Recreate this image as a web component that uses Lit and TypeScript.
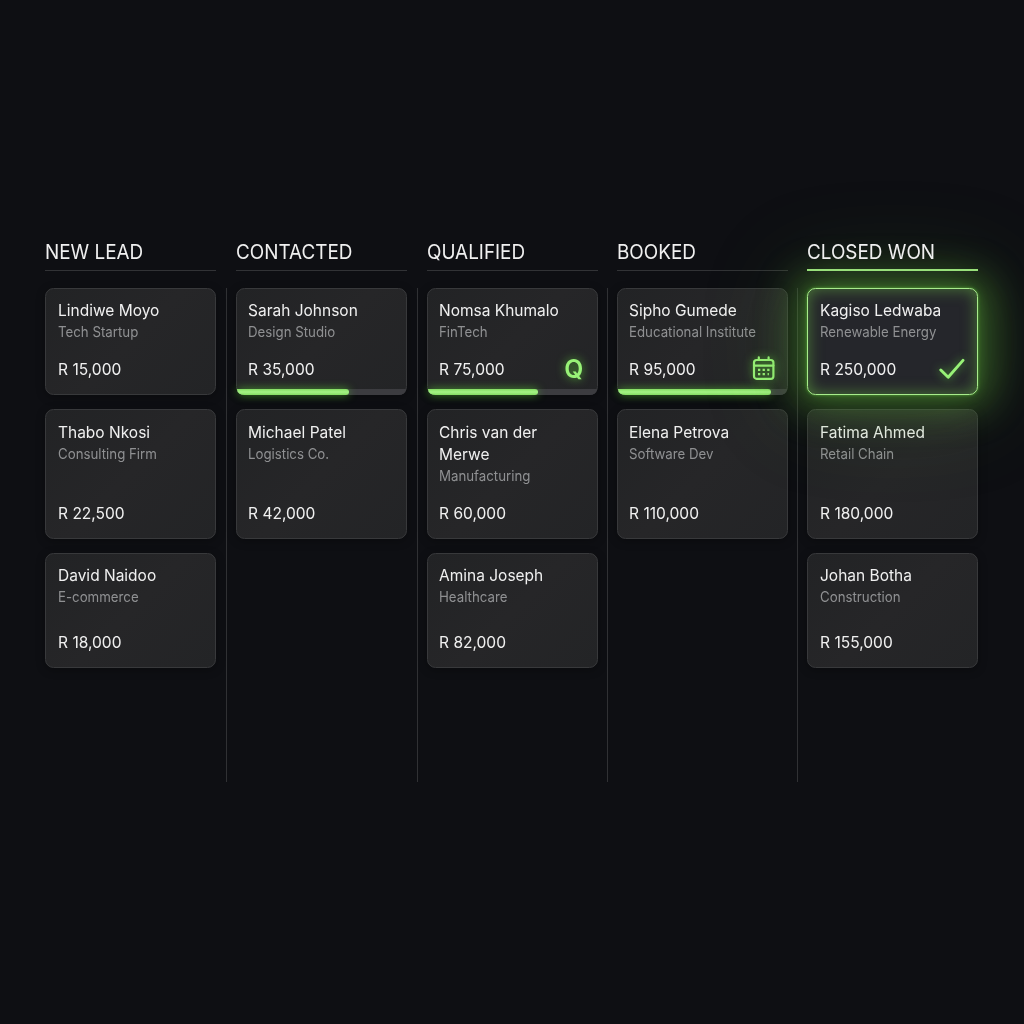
import { LitElement, html, css, svg, nothing } from "lit";
import { customElement, property } from "lit/decorators.js";
import { classMap } from "lit/directives/class-map.js";

type Badge = "q" | "calendar" | "check";

interface Deal {
  name: string;
  company: string;
  amount: string;
  progress?: number;
  badge?: Badge;
  won?: boolean;
}

interface Stage {
  title: string;
  active?: boolean;
  deals: Deal[];
}

const STAGES: Stage[] = [
  {
    title: "NEW LEAD",
    deals: [
      { name: "Lindiwe Moyo", company: "Tech Startup", amount: "R 15,000" },
      { name: "Thabo Nkosi", company: "Consulting Firm", amount: "R 22,500" },
      { name: "David Naidoo", company: "E-commerce", amount: "R 18,000" },
    ],
  },
  {
    title: "CONTACTED",
    deals: [
      { name: "Sarah Johnson", company: "Design Studio", amount: "R 35,000", progress: 66.3 },
      { name: "Michael Patel", company: "Logistics Co.", amount: "R 42,000" },
    ],
  },
  {
    title: "QUALIFIED",
    deals: [
      { name: "Nomsa Khumalo", company: "FinTech", amount: "R 75,000", progress: 64.8, badge: "q" },
      { name: "Chris van der Merwe", company: "Manufacturing", amount: "R 60,000" },
      { name: "Amina Joseph", company: "Healthcare", amount: "R 82,000" },
    ],
  },
  {
    title: "BOOKED",
    deals: [
      { name: "Sipho Gumede", company: "Educational Institute", amount: "R 95,000", progress: 90.5, badge: "calendar" },
      { name: "Elena Petrova", company: "Software Dev", amount: "R 110,000" },
    ],
  },
  {
    title: "CLOSED WON",
    active: true,
    deals: [
      { name: "Kagiso Ledwaba", company: "Renewable Energy", amount: "R 250,000", badge: "check", won: true },
      { name: "Fatima Ahmed", company: "Retail Chain", amount: "R 180,000" },
      { name: "Johan Botha", company: "Construction", amount: "R 155,000" },
    ],
  },
];

const calendarIcon = svg`
  <rect x="2" y="4" width="19.4" height="18.8" rx="2.6" />
  <path d="M2 9.6H21.4M6.8 1.4V4M16.6 1.4V4" />
  <path class="dots" d="M6 13.8h2.3M10.6 13.8h2.3M15.2 13.8h2.3M6 18.2h2.3M10.6 18.2h2.3M15.6 18.2h1.3" />`;

@customElement("deal-card")
export class DealCard extends LitElement {
  @property({ attribute: false }) deal!: Deal;

  static styles = css`
    :host {
      display: block;
      min-height: 0;
    }
    :host([won]) {
      position: relative;
      z-index: 1;
    }
    .card {
      box-sizing: border-box;
      height: 100%;
      display: flex;
      flex-direction: column;
      border: 1px solid #38393b;
      border-radius: 8.5px;
      background: linear-gradient(135deg, #222325 0%, #262628 50%, #232426 100%);
      box-shadow: 0 2px 10px rgba(0, 0, 0, 0.3);
    }
    .won {
      border: 1.5px solid #a8eb8c;
      background: #25262b;
      box-shadow:
        0 0 3px rgba(110, 220, 70, 0.55),
        0 0 12px rgba(100, 200, 60, 0.24),
        0 0 38px 12px rgba(95, 172, 58, 0.46),
        0 0 90px 20px rgba(80, 155, 50, 0.17),
        inset 0 0 15px rgba(105, 190, 65, 0.55);
    }
    .body {
      flex: 1;
      display: flex;
      flex-direction: column;
      padding: var(--lead, 10px) 11.5px 0 var(--inset, 11.5px);
    }
    .name {
      width: 105%;
      color: #f0f0f0;
      font-size: 16.3px;
      line-height: 22px;
      transform: scaleX(0.952);
      transform-origin: 0 50%;
    }
    .company {
      color: #8f9092;
      font-size: 14.4px;
      line-height: 22px;
      white-space: nowrap;
      transform: scaleX(0.922);
      transform-origin: 0 50%;
    }
    .foot {
      margin-top: auto;
      height: 26px;
      display: flex;
      justify-content: space-between;
      align-items: center;
      padding-bottom: 12px;
      color: #f0f0f0;
    }
    .amount {
      font-size: 16.3px;
      line-height: 26px;
      white-space: nowrap;
      transform: scaleX(0.955);
      transform-origin: 0 50%;
    }
    .badge {
      width: 24px;
      height: 26px;
      display: flex;
      align-items: center;
      justify-content: center;
      color: #98f277;
      filter: drop-shadow(0 0 5px rgba(100, 220, 60, 0.75));
    }
    .letter {
      margin-left: 1px;
      font-size: 25.5px;
      line-height: 26px;
      font-weight: 600;
      transform: scaleX(0.97);
    }
    svg {
      display: block;
      flex: none;
      fill: none;
      stroke: currentColor;
      stroke-width: 2.2;
      stroke-linecap: round;
      stroke-linejoin: round;
      overflow: visible;
    }
    .dots {
      stroke-linecap: butt;
      stroke-width: 2.2;
    }
    .check {
      stroke-width: 2.9;
      margin-right: 3px;
    }
    .progress .foot {
      padding-bottom: 7.5px;
    }
    .track {
      height: 5.5px;
      margin: 0 0 -1px;
      border-radius: 0 0 7.5px 7.5px / 0 0 5.5px 5.5px;
      background: #3c3c40;
    }
    .fill {
      height: 100%;
      border-radius: 0 3px 3px 7.5px / 0 3px 3px 5.5px;
      background: linear-gradient(#84dc62, #a4f385 50%, #84dc62);
      box-shadow: 0 0 8px rgba(95, 215, 55, 0.65);
    }
  `;

  private renderBadge(badge: Badge) {
    if (badge === "q") return html`<span class="letter">Q</span>`;
    if (badge === "calendar") {
      return html`<svg width="24" height="25" viewBox="0 0 24 25">${calendarIcon}</svg>`;
    }
    return html`<svg class="check" width="26" height="22" viewBox="0 0 26 22">
      <path d="M1.8 12L9.2 19.2L24 2.4" />
    </svg>`;
  }

  render() {
    const d = this.deal;
    const hasProgress = d.progress !== undefined;
    return html`
      <article class=${classMap({ card: true, won: !!d.won, progress: hasProgress })}>
        <div class="body">
          <div class="name">${d.name}</div>
          <div class="company">${d.company}</div>
          <div class="foot">
            <span class="amount">${d.amount}</span>
            ${d.badge ? html`<span class="badge">${this.renderBadge(d.badge)}</span>` : nothing}
          </div>
        </div>
        ${hasProgress
          ? html`<div class="track"><div class="fill" style="width:${d.progress}%"></div></div>`
          : nothing}
      </article>
    `;
  }
}

@customElement("app-root")
export class AppRoot extends LitElement {
  static styles = css`
    :host {
      display: block;
      box-sizing: border-box;
      height: 1024px;
      overflow: hidden;
      padding: 238px 45px 0;
      background: #0e0f13;
      font-family: Inter, "Liberation Sans", sans-serif;
    }
    .board {
      display: grid;
      grid-template-columns: 171px 20px 171px 20px 171px 19px 171px 19px 171px;
      height: 544px;
    }
    .stage {
      --inset: 11.1px;
    }
    .stage:first-child,
    .stage:last-child {
      --inset: 11.6px;
    }
    .title {
      box-sizing: border-box;
      height: 33px;
      margin: 0 0 17px;
      border-bottom: 1px solid #323336;
      color: #f0f0f0;
      font-size: 20.4px;
      line-height: 28px;
      font-weight: 400;
      white-space: nowrap;
    }
    .label {
      display: inline-block;
      transform: scaleX(0.926);
      transform-origin: 0 50%;
    }
    .active .title {
      position: relative;
      z-index: 2;
      border-bottom: 2px solid #98e07a;
    }
    .cards {
      display: grid;
      grid-template-rows: 106.5px 129.5px 114.5px;
      row-gap: 14.5px;
    }
    .cards deal-card:nth-child(2) {
      --lead: 10.5px;
    }
    .divider {
      width: 1px;
      justify-self: center;
      margin-top: 50px;
      background: #303134;
    }
  `;

  render() {
    return html`
      <main class="board">
        ${STAGES.map(
          (stage, i) => html`
            ${i > 0 ? html`<div class="divider"></div>` : nothing}
            <section class=${classMap({ stage: true, active: !!stage.active })}>
              <h2 class="title"><span class="label">${stage.title}</span></h2>
              <div class="cards">
                ${stage.deals.map((d) => html`<deal-card .deal=${d} ?won=${!!d.won}></deal-card>`)}
              </div>
            </section>
          `,
        )}
      </main>
    `;
  }
}
